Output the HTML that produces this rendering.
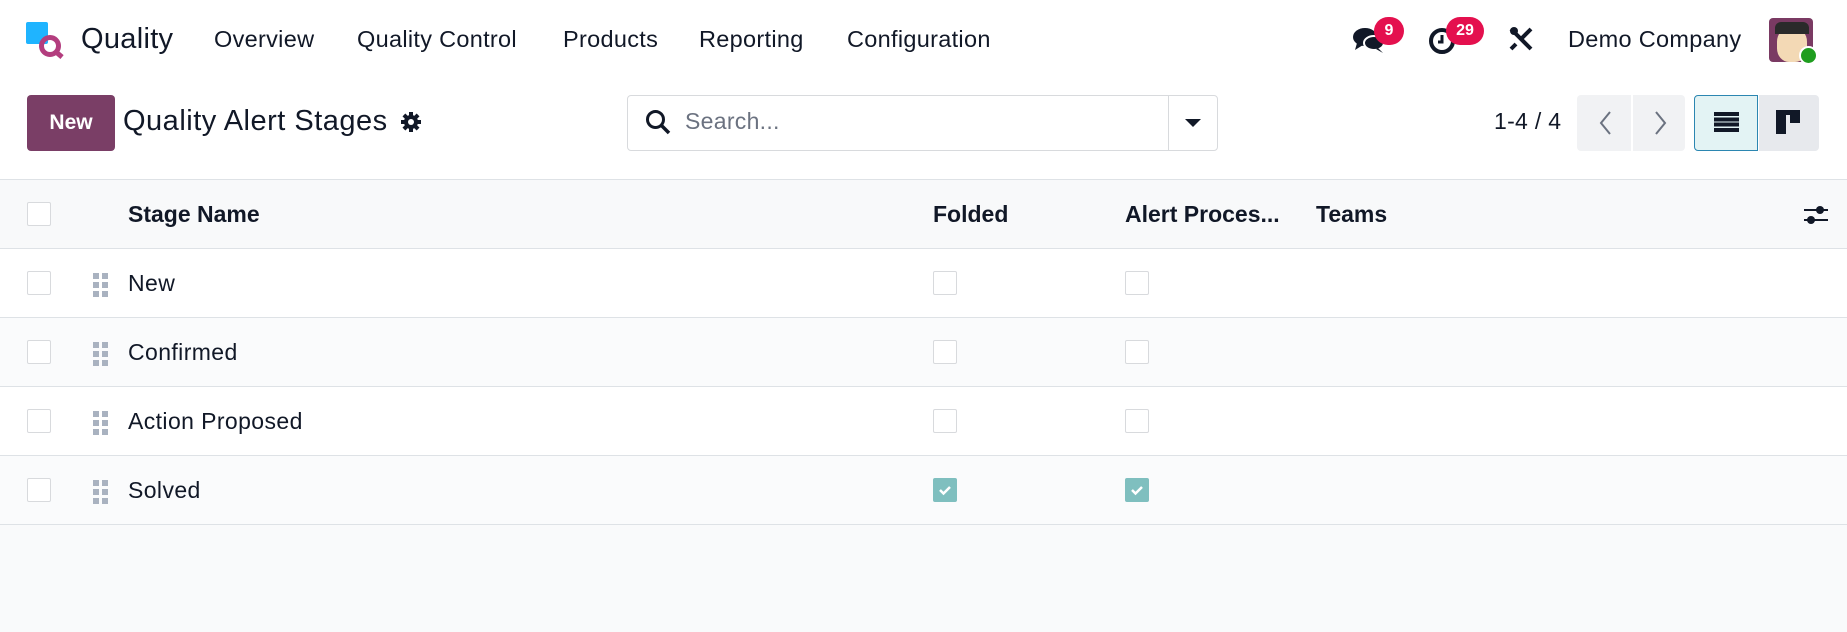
<!DOCTYPE html>
<html><head><meta charset="utf-8"><style>
*{box-sizing:border-box;margin:0;padding:0}
body{width:1847px;height:632px;background:#f9fafb;font-family:"Liberation Sans",sans-serif;color:#111827;position:relative;overflow:hidden}
.a{position:absolute}
.nav{left:0;top:0;width:1847px;height:80px;background:#fff}
.ni{top:26px;font-size:23.5px;white-space:nowrap;letter-spacing:0.3px}
.cp{left:0;top:80px;width:1847px;height:99px;background:#fff}
.tbl{left:0;top:179px;width:1847px}
.row{position:absolute;left:0;width:1847px;height:69px;border-bottom:1.5px solid #dee2e6}
.cb{position:absolute;width:24px;height:24px;border:1px solid #d8dadd;background:#fff;border-radius:2px}
.txt{position:absolute;font-size:23px;top:21px;letter-spacing:0.4px}
.chk{background:#7fbfbf;border-color:#7fbfbf}
.h{position:absolute;display:grid;grid-template-columns:6px 6px;gap:3px;left:93px;top:24px}
.h i{width:6px;height:6px;background:#a9b2c0;display:block}
</style></head><body>
<div class="a nav"></div>
<div class="a" style="left:26px;top:22px;width:22px;height:22px;background:#1fb4ff;border-radius:2px"></div>
<div class="a" style="left:39px;top:35px;width:22px;height:22px;border:5px solid #b33d7e;border-radius:50%"></div>
<div class="a" style="left:55px;top:52px;width:8px;height:5px;background:#b33d7e;transform:rotate(40deg)"></div>
<div class="a ni" style="left:81px;top:23px;font-size:29px">Quality</div>
<div class="a ni" style="left:214px">Overview</div>
<div class="a ni" style="left:357px">Quality Control</div>
<div class="a ni" style="left:563px">Products</div>
<div class="a ni" style="left:699px">Reporting</div>
<div class="a ni" style="left:847px">Configuration</div>
<svg class="a" style="left:1352px;top:26px" width="34" height="28" viewBox="0 0 34 28"><ellipse cx="13" cy="11" rx="12" ry="9" fill="#111827"/><path d="M5 17 L3 24 L11 19Z" fill="#111827"/><ellipse cx="22" cy="17" rx="10" ry="7" fill="#111827" stroke="#fff" stroke-width="2"/><path d="M26 22 L31 27 L24 23Z" fill="#111827"/></svg>
<div class="a" style="left:1374px;top:17px;width:30px;height:28px;border-radius:14px;background:#e4104e;color:#fff;font-weight:bold;font-size:16px;text-align:center;line-height:28px">9</div>
<svg class="a" style="left:1428px;top:26px" width="30" height="30" viewBox="0 0 30 30"><circle cx="14" cy="15" r="11" fill="none" stroke="#111827" stroke-width="4"/><path d="M14 9v7h-4" stroke="#111827" stroke-width="3" fill="none"/></svg>
<div class="a" style="left:1446px;top:17px;width:38px;height:28px;border-radius:14px;background:#e4104e;color:#fff;font-weight:bold;font-size:16px;text-align:center;line-height:28px">29</div>
<svg class="a" style="left:1508px;top:26px" width="26" height="26" viewBox="0 0 26 26"><path d="M3 3 L23 23 M23 3 L12 14 M3 23 L8 18" stroke="#111827" stroke-width="4" fill="none"/><circle cx="6" cy="5" r="4" fill="#111827"/></svg>
<div class="a ni" style="left:1568px">Demo Company</div>
<div class="a" style="left:1769px;top:18px;width:44px;height:44px;border-radius:4px;background:#7a3a63;overflow:hidden"><div style="position:absolute;left:8px;top:10px;width:30px;height:34px;background:#f3d9b5;border-radius:40%"></div><div style="position:absolute;left:6px;top:4px;width:34px;height:12px;background:#2a2a2a;border-radius:6px 6px 0 0"></div></div>
<div class="a" style="left:1799px;top:46px;width:19px;height:19px;border-radius:50%;background:#1f9d1f;border:2px solid #fff"></div>

<div class="a cp"></div>
<div class="a" style="left:27px;top:95px;width:88px;height:56px;background:#7a3e66;border-radius:4px;color:#fff;font-weight:bold;font-size:21px;text-align:center;line-height:56px">New</div>
<div class="a" style="left:123px;top:105px;font-size:29px;letter-spacing:0.5px">Quality Alert Stages</div>
<svg class="a" style="left:400px;top:111px" width="22" height="22" viewBox="0 0 22 22"><g fill="#111827"><circle cx="11" cy="11" r="7"/><rect x="9" y="1" width="4" height="20"/><rect x="1" y="9" width="20" height="4"/><rect x="9" y="1" width="4" height="20" transform="rotate(45 11 11)"/><rect x="9" y="1" width="4" height="20" transform="rotate(-45 11 11)"/></g><circle cx="11" cy="11" r="3" fill="#fff"/></svg>
<div class="a" style="left:627px;top:95px;width:591px;height:56px;border:1px solid #d8dadd;border-radius:4px;background:#fff"></div>
<svg class="a" style="left:645px;top:109px" width="26" height="26" viewBox="0 0 26 26"><circle cx="10.5" cy="10.5" r="8" fill="none" stroke="#111827" stroke-width="3"/><path d="M16.5 16.5 L24 24" stroke="#111827" stroke-width="3.5"/></svg>
<div class="a" style="left:685px;top:108px;font-size:23px;color:#6b7280;letter-spacing:0.3px">Search...</div>
<div class="a" style="left:1168px;top:96px;width:1px;height:54px;background:#d8dadd"></div>
<div class="a" style="left:1185px;top:119px;border-left:8px solid transparent;border-right:8px solid transparent;border-top:8px solid #111827"></div>
<div class="a" style="left:1494px;top:108px;font-size:23px;letter-spacing:0.3px">1-4 / 4</div>
<div class="a" style="left:1577px;top:95px;width:108px;height:56px;background:#f1f2f4;border-radius:4px"></div>
<div class="a" style="left:1631px;top:95px;width:2px;height:56px;background:#fff"></div>
<svg class="a" style="left:1593px;top:108px" width="80" height="30" viewBox="0 0 80 30"><path d="M17 4 L8 15 L17 26" stroke="#6b7280" stroke-width="2" fill="none"/><path d="M63 4 L72 15 L63 26" stroke="#6b7280" stroke-width="2" fill="none"/></svg>
<div class="a" style="left:1694px;top:95px;width:64px;height:56px;background:#e3f3f4;border:1.5px solid #2b86b1;border-radius:4px 0 0 4px"></div>
<div class="a" style="left:1759px;top:95px;width:60px;height:56px;background:#e7e9ed;border-radius:0 4px 4px 0"></div>
<div class="a" style="left:1714px;top:112px;width:25px;height:20px;background:repeating-linear-gradient(#111827 0 4px,transparent 4px 5.3px)"></div>
<div class="a" style="left:1776px;top:110px;width:10px;height:24px;background:#111827"></div>
<div class="a" style="left:1776px;top:110px;width:24px;height:5px;background:#111827"></div>
<div class="a" style="left:1790px;top:110px;width:10px;height:13px;background:#111827"></div>

<div class="a tbl">
<div class="row" style="top:0;height:70px;background:#f8f9fa;border-top:1px solid #dee2e6">
<div class="cb" style="left:27px;top:22px"></div>
<div class="txt" style="left:128px;font-weight:bold;letter-spacing:0">Stage Name</div>
<div class="txt" style="left:933px;font-weight:bold;letter-spacing:0">Folded</div>
<div class="txt" style="left:1125px;font-weight:bold;letter-spacing:0">Alert Proces...</div>
<div class="txt" style="left:1316px;font-weight:bold;letter-spacing:0">Teams</div>
<svg style="position:absolute;left:1803px;top:22px" width="26" height="26" viewBox="0 0 26 26"><path d="M1 8h24M1 18h24" stroke="#111827" stroke-width="2"/><circle cx="17" cy="8" r="4" fill="#111827"/><circle cx="8" cy="18" r="4" fill="#111827"/></svg>
</div>
<div class="row" style="top:70px;background:#fff"><div class="cb" style="left:27px;top:22px"></div><div class="h"><i></i><i></i><i></i><i></i><i></i><i></i></div><div class="txt" style="left:128px">New</div><div class="cb" style="left:933px;top:22px"></div><div class="cb" style="left:1125px;top:22px"></div></div>
<div class="row" style="top:139px;background:#fafbfc"><div class="cb" style="left:27px;top:22px"></div><div class="h"><i></i><i></i><i></i><i></i><i></i><i></i></div><div class="txt" style="left:128px">Confirmed</div><div class="cb" style="left:933px;top:22px"></div><div class="cb" style="left:1125px;top:22px"></div></div>
<div class="row" style="top:208px;background:#fff"><div class="cb" style="left:27px;top:22px"></div><div class="h"><i></i><i></i><i></i><i></i><i></i><i></i></div><div class="txt" style="left:128px">Action Proposed</div><div class="cb" style="left:933px;top:22px"></div><div class="cb" style="left:1125px;top:22px"></div></div>
<div class="row" style="top:277px;background:#fafbfc"><div class="cb" style="left:27px;top:22px"></div><div class="h"><i></i><i></i><i></i><i></i><i></i><i></i></div><div class="txt" style="left:128px">Solved</div>
<div class="cb chk" style="left:933px;top:22px"><svg width="22" height="22" viewBox="0 0 22 22"><path d="M6 11 L9.5 14.5 L16 8" stroke="#fff" stroke-width="2.5" fill="none"/></svg></div>
<div class="cb chk" style="left:1125px;top:22px"><svg width="22" height="22" viewBox="0 0 22 22"><path d="M6 11 L9.5 14.5 L16 8" stroke="#fff" stroke-width="2.5" fill="none"/></svg></div></div>
</div>
</body></html>
